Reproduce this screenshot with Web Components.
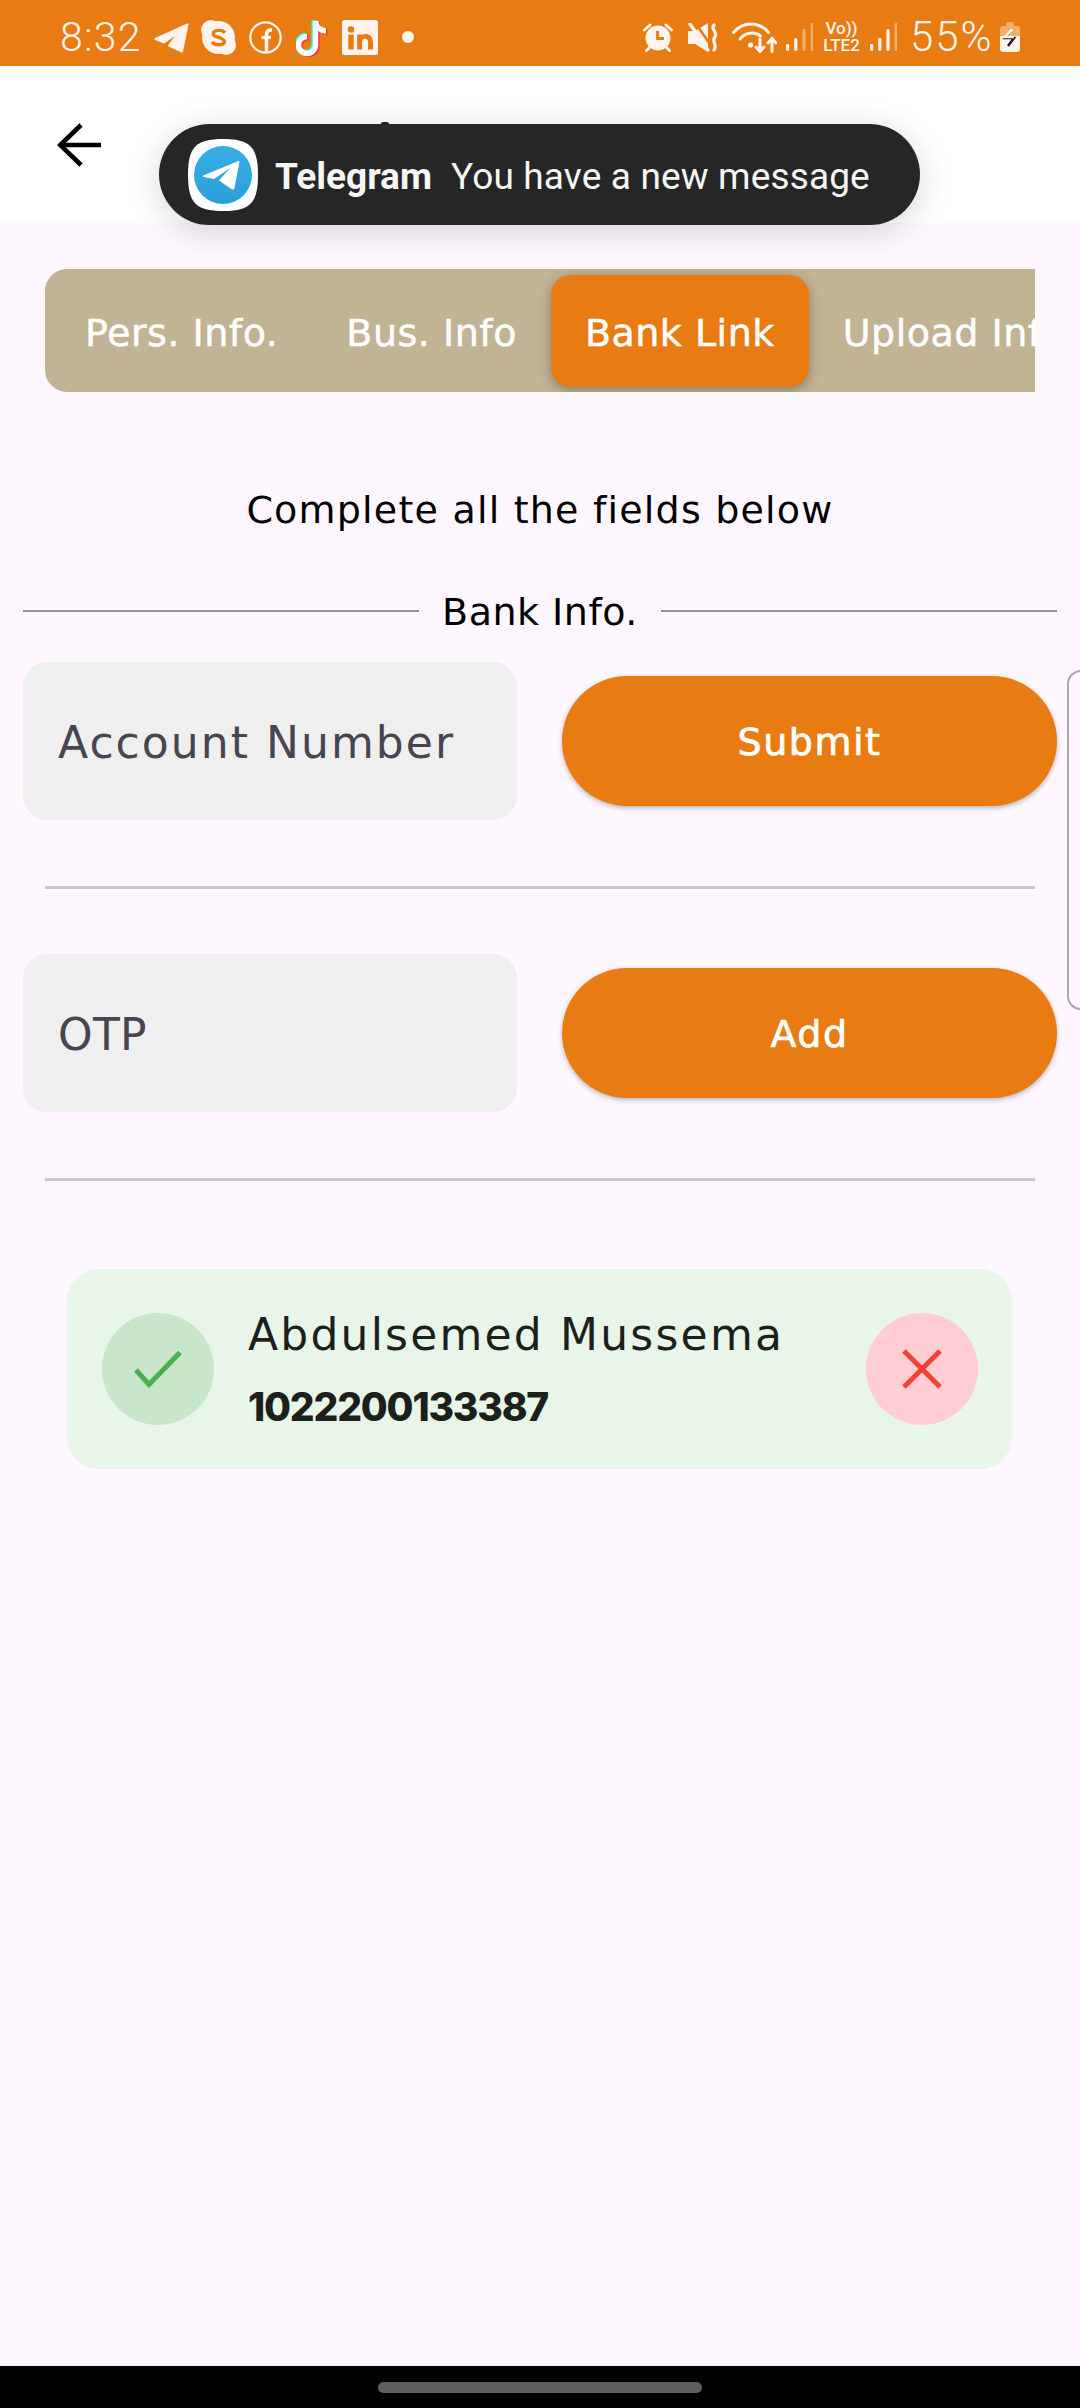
<!DOCTYPE html>
<html lang="en">
<head>
<meta charset="utf-8">
<title>Bank Link</title>
<style>
  html, body { margin: 0; padding: 0; }
  body {
    width: 1080px;
    height: 2408px;
    overflow: hidden;
    background: #FEF7FF;
    font-family: "DejaVu Sans", "Liberation Sans", sans-serif;
  }
  .page {
    position: relative;
    display: flex;
    flex-direction: column;
    height: 2408px;
  }
  .content { flex: 1; display: flex; flex-direction: column; }
</style>
</head>
<body>
<div class="page">
  <status-bar></status-bar>
  <app-bar></app-bar>
  <div class="content">
    <tab-strip>
      <strip-tab>Pers. Info.</strip-tab>
      <strip-tab>Bus. Info</strip-tab>
      <strip-tab active>Bank Link</strip-tab>
      <strip-tab>Upload Info</strip-tab>
    </tab-strip>
    <page-note>Complete all the fields below</page-note>
    <section-label>Bank Info.</section-label>
    <form-row label="Account Number" spacing="2.05" action="Submit" style="margin-top:31px"></form-row>
    <thin-rule style="margin-top:66px"></thin-rule>
    <form-row label="OTP" spacing="0.3" action="Add" style="margin-top:65px"></form-row>
    <thin-rule style="margin-top:66px"></thin-rule>
    <account-card name="Abdulsemed Mussema" number="1022200133387"></account-card>
  </div>
  <nav-handle></nav-handle>
  <toast-pill app="Telegram" text="You have a new message"></toast-pill>
  <edge-handle></edge-handle>
</div>

<script>
const CREAM = '#FFF5EE';
const ORANGE = '#E87C13';

class StatusBar extends HTMLElement {
  constructor() {
    super();
    this.attachShadow({ mode: 'open' });
  }

  connectedCallback() {
    this.shadowRoot.innerHTML = `
      <style>
        :host {
          display: flex;
          align-items: center;
          justify-content: space-between;
          box-sizing: border-box;
          height: 66px;
          padding: 8px 60px 0;
          background: ${ORANGE};
          color: ${CREAM};
          font-family: "Roboto", "Liberation Sans", sans-serif;
        }
        .group { display: flex; align-items: center; }
        svg { display: block; flex: none; }
        .time { font-size: 41px; font-weight: 300; width: 78px; line-height: 50px; white-space: nowrap; letter-spacing: 1.2px; }
        .pct { font-size: 42px; font-weight: 300; width: 82px; line-height: 50px; white-space: nowrap; letter-spacing: 2px; margin: 0 8px 0 13px; }
        .volte {
          width: 39px;
          margin: 0 9px;
          font-size: 17px;
          font-weight: 500;
          line-height: 17px;
          text-align: center;
          white-space: nowrap;
        }
      </style>
      <div class="group">
        <span class="time">8:32</span>
        <svg width="35" height="30" viewBox="0 0 35 30" style="margin-left:16px;margin-top:2px" fill="${CREAM}" stroke="${CREAM}" stroke-width="2" stroke-linejoin="round">
          <path d="M33.5 1.5 L1.5 16 L10 19.5 L25 9 L15 22.5 L28 28.5 Z"/>
        </svg>
        <svg width="35" height="35" viewBox="0 0 35 35" style="margin-left:12px">
          <g fill="${CREAM}"><circle cx="17.5" cy="17.5" r="16.5"/><circle cx="10" cy="10" r="10"/><circle cx="25" cy="25" r="10"/></g>
          <path d="M24 12.8 C21.5 9.4 12.6 9.4 12.2 13.8 C11.8 18 23.8 16.6 23.4 21.8 C22.6 25.8 13.4 25.6 11 22" fill="none" stroke="${ORANGE}" stroke-width="3.4"/>
        </svg>
        <svg width="33" height="33" viewBox="0 0 33 33" style="margin-left:13px" fill="none" stroke="${CREAM}">
          <circle cx="16.5" cy="16.5" r="15.2" stroke-width="2.2"/>
          <path d="M17.5 31 V14 C17.5 10 19.5 8.6 23 9" stroke-width="3.6"/>
          <path d="M12.5 16.5 H22" stroke-width="3.2"/>
        </svg>
        <svg width="33" height="39" viewBox="0 0 33 39" style="margin-left:14px" fill="none" stroke-width="5.4">
          <g stroke="#25F4EE" transform="translate(-1.4,-1)"><path d="M19.5 3 V27 A8.5 8.5 0 1 1 11 18.5"/><path d="M19.5 4 C20 9 25 13 30 13"/></g>
          <g stroke="#FE2C55" transform="translate(1.4,1)"><path d="M19.5 3 V27 A8.5 8.5 0 1 1 11 18.5"/><path d="M19.5 4 C20 9 25 13 30 13"/></g>
          <g stroke="#FFFFFF"><path d="M19.5 3 V27 A8.5 8.5 0 1 1 11 18.5"/><path d="M19.5 4 C20 9 25 13 30 13"/></g>
        </svg>
        <svg width="36" height="35" viewBox="0 0 36 35" style="margin-left:13px">
          <rect width="36" height="35" rx="2.5" fill="${CREAM}"/>
          <circle cx="9" cy="9.5" r="3.2" fill="${ORANGE}"/>
          <rect x="6.3" y="14.5" width="5.4" height="15" fill="${ORANGE}"/>
          <path d="M17.6 29.5 V14.5 M17.6 22 C17.6 15 28.5 14 28.5 22 V29.5" fill="none" stroke="${ORANGE}" stroke-width="5"/>
        </svg>
        <svg width="12" height="12" viewBox="0 0 12 12" style="margin-left:24px"><circle cx="6" cy="6" r="6" fill="${CREAM}"/></svg>
      </div>
      <div class="group">
        <svg width="30" height="29" viewBox="0 0 30 29">
          <circle cx="15" cy="15" r="12.5" fill="${CREAM}"/>
          <path d="M14.5 8 V15.5 H21" fill="none" stroke="${ORANGE}" stroke-width="2.8"/>
          <path d="M1.5 7 L7 2 M28.5 7 L23 2 M7 24 L3.5 27.5 M23 24 L26.5 27.5" stroke="${CREAM}" stroke-width="3" stroke-linecap="round"/>
        </svg>
        <svg width="30" height="29" viewBox="0 0 30 29" style="margin-left:15px">
          <path d="M0 8 H7 L20 0 V29 L7 21 H0 Z" fill="${CREAM}"/>
          <path d="M6 -2 L26 27" stroke="${ORANGE}" stroke-width="2.6"/>
          <path d="M2 1 L20 27" stroke="${CREAM}" stroke-width="3.4" stroke-linecap="round"/>
          <path d="M26 2 C22 6 30 9 27 14 C23 18 30 22 26 27" fill="none" stroke="${CREAM}" stroke-width="3.2" stroke-linecap="round"/>
        </svg>
        <svg width="45" height="31" viewBox="0 0 45 31" style="margin-left:14px" fill="none" stroke="${CREAM}" stroke-width="3" stroke-linecap="round">
          <path d="M1.5 10.5 C11 -1 27 -1 36.5 10.5"/>
          <path d="M8 17 C13 10 23 9.5 28.5 14"/>
          <circle cx="18.5" cy="23" r="2.6" fill="${CREAM}" stroke="none"/>
          <path d="M28 17 V29 M24 25 L28 29.5 L32 25"/>
          <path d="M40 29.5 V17 M36 21 L40 16.5 L44 21"/>
        </svg>
        <signal-bars strong="2" style="margin-left:9px"></signal-bars>
        <div class="volte"><div>Vo))</div><div>LTE2</div></div>
        <signal-bars strong="3"></signal-bars>
        <span class="pct">55%</span>
        <svg width="20" height="30" viewBox="0 0 20 30">
          <path d="M6 2 Q6 0 8 0 H12 Q14 0 14 2 V4 H17 Q20 4 20 7 V15 H0 V7 Q0 4 3 4 H6 Z" fill="${CREAM}" opacity=".42"/>
          <path d="M0 14 H20 V27 Q20 30 17 30 H3 Q0 30 0 27 Z" fill="${CREAM}"/>
          <path d="M12.5 7 L5 16 H14 L8 24" fill="none" stroke="#222" stroke-width="2.6"/>
          <path d="M12.5 7 L5 15 H14" fill="none" stroke="${CREAM}" stroke-width="2.6"/>
        </svg>
      </div>
    `;
  }
}

class SignalBars extends HTMLElement {
  constructor() {
    super();
    this.attachShadow({ mode: 'open' });
  }

  connectedCallback() {
    const strong = Number(this.getAttribute('strong') || 2);
    const heights = [7, 13, 22, 28];
    const bars = heights.map((h, i) => `
      <rect x="${i * 8.2}" y="${28 - h}" width="3.2" height="${h}" rx="1.4" fill="${CREAM}" opacity="${i < strong ? 1 : 0.42}"/>
    `).join('');
    this.shadowRoot.innerHTML = `
      <style>
        :host { display: block; flex: none; width: 27px; height: 29px; }
        svg { display: block; }
      </style>
      <svg width="27" height="29" viewBox="0 0 27 29">${bars}</svg>
    `;
  }
}

class AppBar extends HTMLElement {
  constructor() {
    super();
    this.attachShadow({ mode: 'open' });
  }

  connectedCallback() {
    this.shadowRoot.innerHTML = `
      <style>
        :host {
          position: relative;
          display: flex;
          align-items: center;
          height: 157px;
          padding-left: 57px;
          box-sizing: border-box;
          background: #fff;
        }
        svg { display: block; }
        /* tip of the page title, the rest sits under the toast */
        i { position: absolute; left: 381px; top: 56px; width: 8px; height: 4px; border-radius: 2px 2px 0 0; background: #222; }
      </style>
      <svg width="44" height="44" viewBox="0 0 44 44" fill="none" stroke="#000" stroke-width="4.6">
        <path d="M44 22 H3"/>
        <path d="M24 2 L3.2 22 L24 42"/>
      </svg>
      <i></i>
    `;
  }
}

class ToastPill extends HTMLElement {
  constructor() {
    super();
    this.attachShadow({ mode: 'open' });
  }

  connectedCallback() {
    this.shadowRoot.innerHTML = `
      <style>
        :host {
          position: absolute;
          left: 159px;
          top: 124px;
          width: 761px;
          height: 101px;
          box-sizing: border-box;
          display: flex;
          align-items: center;
          padding-left: 29px;
          border-radius: 51px;
          background: #262626;
          color: #f6f6f6;
          font-family: "Roboto", "Inter", sans-serif;
          font-size: 37px;
          white-space: nowrap;
          box-shadow: 0 6px 34px rgba(0, 0, 0, 0.16);
        }
        svg { display: block; flex: none; }
        b { font-weight: 700; margin: 3px 0 0 17px; width: 156px; }
        span { margin: 3px 0 0 20px; letter-spacing: 0.15px; font-weight: 400; }
      </style>
      <svg width="70" height="72" viewBox="0 0 70 72">
        <defs>
          <linearGradient id="tg" x1="0" y1="0" x2="0" y2="1">
            <stop offset="0" stop-color="#37AEE6"/><stop offset="1" stop-color="#2C9FD8"/>
          </linearGradient>
        </defs>
        <path d="M35 0 C62 0 70 8 70 36 C70 64 62 72 35 72 C8 72 0 64 0 36 C0 8 8 0 35 0 Z" fill="#fff"/>
        <circle cx="35" cy="36" r="29" fill="url(#tg)"/>
        <path d="M50.5 22 L15 36.5 Q14 37.5 16 38 L26 40 L42 29 L31 41.5 L44 50.5 Q46 51 46.5 49 L51.5 23 Q51.5 21.5 50.5 22 Z" fill="#fff"/>
      </svg>
      <b>${this.getAttribute('app')}</b>
      <span>${this.getAttribute('text')}</span>
    `;
  }
}

class TabStrip extends HTMLElement {
  constructor() {
    super();
    this.attachShadow({ mode: 'open' });
  }

  connectedCallback() {
    this.shadowRoot.innerHTML = `
      <style>
        :host {
          display: flex;
          align-items: stretch;
          box-sizing: border-box;
          margin: 46px 45px 0;
          height: 123px;
          padding: 6px 0 5px 6px;
          border-radius: 22px 0 0 22px;
          background: #C2B394;
          overflow: hidden;
        }
      </style>
      <slot></slot>
    `;
  }
}

class StripTab extends HTMLElement {
  constructor() {
    super();
    this.attachShadow({ mode: 'open' });
  }

  connectedCallback() {
    this.shadowRoot.innerHTML = `
      <style>
        :host {
          display: flex;
          flex: none;
          align-items: center;
          padding: 3px 34px 0;
          border-radius: 20px;
          color: #fff;
          font-size: 38px;
          letter-spacing: 0.5px;
          -webkit-text-stroke: 0.5px #fff;
          white-space: nowrap;
        }
        :host([active]) {
          background: ${ORANGE};
          box-shadow: 0 3px 12px rgba(0, 0, 0, 0.3);
        }
      </style>
      <slot></slot>
    `;
  }
}

class PageNote extends HTMLElement {
  constructor() {
    super();
    this.attachShadow({ mode: 'open' });
  }

  connectedCallback() {
    this.shadowRoot.innerHTML = `
      <style>
        :host {
          display: block;
          margin-top: 90px;
          line-height: 56px;
          text-align: center;
          color: #000;
          font-size: 38px;
          letter-spacing: 1.2px;
        }
      </style>
      <slot></slot>
    `;
  }
}

class SectionLabel extends HTMLElement {
  constructor() {
    super();
    this.attachShadow({ mode: 'open' });
  }

  connectedCallback() {
    this.shadowRoot.innerHTML = `
      <style>
        :host {
          display: flex;
          align-items: center;
          gap: 23px;
          height: 40px;
          margin: 53px 23px 0;
          color: #000;
          font-size: 38px;
          letter-spacing: 0.5px;
          white-space: nowrap;
        }
        i { flex: 1; height: 2px; background: #948F99; }
        span { padding-top: 2px; }
      </style>
      <i></i><span><slot></slot></span><i></i>
    `;
  }
}

class FormRow extends HTMLElement {
  constructor() {
    super();
    this.attachShadow({ mode: 'open' });
  }

  connectedCallback() {
    this.shadowRoot.innerHTML = `
      <style>
        :host {
          display: flex;
          align-items: center;
          gap: 45px;
          margin: 0 23px;
        }
        .field {
          flex: none;
          box-sizing: border-box;
          width: 494px;
          height: 158px;
          padding: 2px 0 0 35px;
          display: flex;
          align-items: center;
          border-radius: 24px;
          background: #EFEFEF;
          color: #49454F;
          font-size: 44px;
          letter-spacing: ${this.getAttribute('spacing') || 0}px;
          white-space: nowrap;
        }
        .action {
          flex: none;
          box-sizing: border-box;
          width: 495px;
          height: 130px;
          padding-top: 2px;
          display: flex;
          align-items: center;
          justify-content: center;
          border-radius: 65px;
          background: ${ORANGE};
          color: #fff;
          font-size: 38px;
          letter-spacing: 1.5px;
          -webkit-text-stroke: 0.7px #fff;
          box-shadow: 0 2px 5px rgba(0, 0, 0, 0.28);
        }
      </style>
      <div class="field">${this.getAttribute('label')}</div>
      <div class="action">${this.getAttribute('action')}</div>
    `;
  }
}

class ThinRule extends HTMLElement {
  constructor() {
    super();
    this.attachShadow({ mode: 'open' });
  }

  connectedCallback() {
    this.shadowRoot.innerHTML = `
      <style>
        :host { display: block; height: 3px; margin: 0 45px; background: #CAC4D0; }
      </style>
    `;
  }
}

class AccountCard extends HTMLElement {
  constructor() {
    super();
    this.attachShadow({ mode: 'open' });
  }

  connectedCallback() {
    this.shadowRoot.innerHTML = `
      <style>
        :host {
          display: flex;
          align-items: center;
          box-sizing: border-box;
          height: 200px;
          margin: 88px 68px 0 67px;
          padding: 0 34px 0 35px;
          border-radius: 32px;
          background: #E8F5E9;
          color: #1D1F1A;
        }
        .badge {
          flex: none;
          width: 112px;
          height: 112px;
          border-radius: 50%;
          display: flex;
          align-items: center;
          justify-content: center;
        }
        .ok { background: #C8E6C9; }
        .no { background: #FFCDD2; }
        svg { display: block; }
        .text { flex: 1; padding-left: 34px; }
        .name { font-size: 44px; line-height: 60px; letter-spacing: 2.2px; white-space: nowrap; }
        .number {
          font-family: "Inter", "Liberation Sans", sans-serif;
          font-size: 39px;
          line-height: 52px;
          margin-top: 16px;
          font-weight: 800;
          letter-spacing: -1.2px;
          white-space: nowrap;
        }
      </style>
      <div class="badge ok">
        <svg width="48" height="37" viewBox="0 0 48 37" fill="none" stroke="#4CAF50" stroke-width="5">
          <path d="M2 19 L15 33.5 L46 1.5"/>
        </svg>
      </div>
      <div class="text">
        <div class="name">${this.getAttribute('name')}</div>
        <div class="number">${this.getAttribute('number')}</div>
      </div>
      <div class="badge no">
        <svg width="40" height="40" viewBox="0 0 40 40" fill="none" stroke="#F44336" stroke-width="5">
          <path d="M2 2 L38 38 M38 2 L2 38"/>
        </svg>
      </div>
    `;
  }
}

class EdgeHandle extends HTMLElement {
  constructor() {
    super();
    this.attachShadow({ mode: 'open' });
  }

  connectedCallback() {
    this.shadowRoot.innerHTML = `
      <style>
        :host {
          position: absolute;
          left: 1067px;
          top: 670px;
          width: 30px;
          height: 340px;
          box-sizing: border-box;
          border: 2.5px solid #A8A8A8;
          border-radius: 14px;
        }
      </style>
    `;
  }
}

class NavHandle extends HTMLElement {
  constructor() {
    super();
    this.attachShadow({ mode: 'open' });
  }

  connectedCallback() {
    this.shadowRoot.innerHTML = `
      <style>
        :host {
          display: flex;
          justify-content: center;
          box-sizing: border-box;
          height: 42px;
          padding-top: 16px;
          background: #000;
        }
        i { display: block; width: 324px; height: 11px; border-radius: 6px; background: #5F5F5F; }
      </style>
      <i></i>
    `;
  }
}

customElements.define('status-bar', StatusBar);
customElements.define('signal-bars', SignalBars);
customElements.define('app-bar', AppBar);
customElements.define('toast-pill', ToastPill);
customElements.define('tab-strip', TabStrip);
customElements.define('strip-tab', StripTab);
customElements.define('page-note', PageNote);
customElements.define('section-label', SectionLabel);
customElements.define('form-row', FormRow);
customElements.define('thin-rule', ThinRule);
customElements.define('account-card', AccountCard);
customElements.define('edge-handle', EdgeHandle);
customElements.define('nav-handle', NavHandle);
</script>
</body>
</html>
